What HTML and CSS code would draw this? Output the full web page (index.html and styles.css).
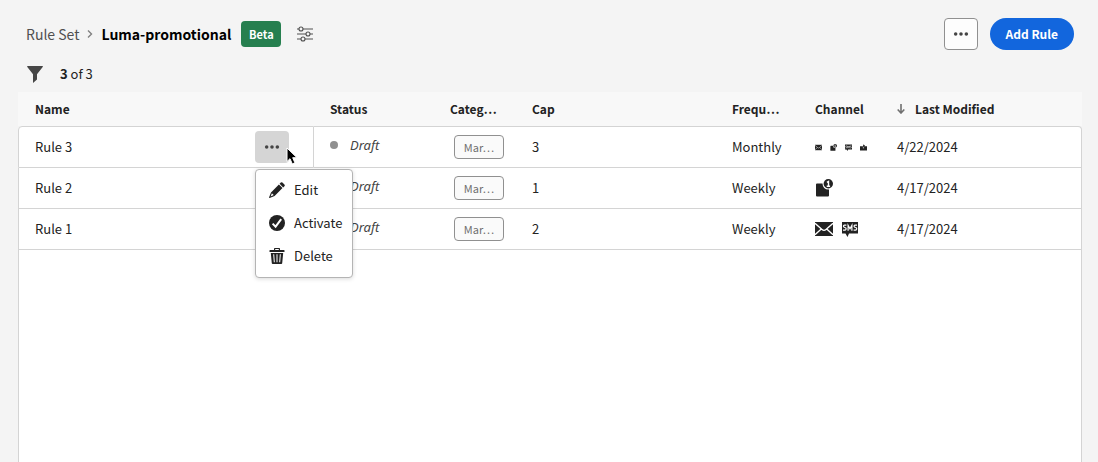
FILE: index.html
```html
<!DOCTYPE html>
<html lang="en">
<head>
<meta charset="utf-8">
<meta name="viewport" content="width=device-width, initial-scale=1">
<title>Luma-promotional</title>
<link rel="stylesheet" href="styles.css">
</head>
<body>
<svg class="sprite" aria-hidden="true">
  <symbol id="mail" viewBox="0 0 18 14"><path fill="currentColor" d="M0 0h18v14H0z"/><path fill="none" stroke="#fff" stroke-width="1.3" d="M0 1.300l7 6.200q2 1.700 4 0l7-6.200M0 12.700l6-5.500M18 12.700l-6-5.500"/></symbol>
  <symbol id="app" viewBox="0 0 18 18"><path fill="currentColor" d="M2 4.500h11V9h1v7.500q0 1-1 1H2q-1 0-1-1v-11q0-1 1-1z"/><circle cx="13.300" cy="4.800" r="5.800" fill="#fff"/><circle cx="13.300" cy="4.800" r="4.700" fill="currentColor"/><path fill="none" stroke="#fff" stroke-width="1.400" d="M11.900 3.300l1.600-.9v4.900M11.700 7.300h3.400"/></symbol>
  <symbol id="sms" viewBox="0 0 16 16"><path fill="currentColor" d="M0 1h16v11.500H7L5.500 16 3.500 12.500H0z"/><path fill="none" stroke="#fff" stroke-width="1.200" d="M4.400 4.100H2.500q-1.300.2-1 1.300.2.800 1.400 1.100 1.500.3 1.100 1.700-.3.900-1.200.9H1M6.100 9.700V4.400L8 7.800l1.900-3.400v5.300M15 4.100h-1.900q-1.300.2-1 1.300.2.800 1.400 1.100 1.500.3 1.100 1.700-.3.900-1.200.9h-1.800"/></symbol>
  <symbol id="direct" viewBox="0 0 18 18"><path fill="currentColor" d="M0 6h7.500v5h3V6H18v11H0zM8 1l5 2-2 2v4H8z"/></symbol>
  <symbol id="more" viewBox="0 0 18 18"><circle cx="3" cy="9" r="2"/><circle cx="9" cy="9" r="2"/><circle cx="15" cy="9" r="2"/></symbol>
</svg>

<header class="topbar">
  <nav class="crumbs" aria-label="Breadcrumb">
    <a class="crumb-link" href="#">Rule Set</a>
    <svg class="chevron" viewBox="0 0 6 10" aria-hidden="true"><path d="M1 1.500L4.500 5 1 8.500"/></svg>
    <h1 class="title">Luma-promotional</h1>
  </nav>
  <span class="badge">Beta</span>
  <button class="icon-button" type="button" aria-label="Properties">
    <svg class="sliders" viewBox="0 0 16 16" aria-hidden="true"><path d="M0 3h2M6 3h10M0 8h9M13 8h3M0 13h4M8 13h8"/><circle cx="4" cy="3" r="2"/><circle cx="11" cy="8" r="2"/><circle cx="6" cy="13" r="2"/></svg>
  </button>
  <div class="actions">
    <button class="more-button" type="button" aria-label="More actions"><svg class="dots" aria-hidden="true"><use href="#more"/></svg></button>
    <button class="primary-button" type="button">Add Rule</button>
  </div>
</header>

<div class="filterbar">
  <button class="icon-button" type="button" aria-label="Filter"><svg class="funnel" viewBox="0 0 16 17" aria-hidden="true"><path d="M.6 0h14.800q.9.200.3 1L10 8.200v5.300L6 17V8.200L.3 1Q-.2.200.6 0z"/></svg></button>
  <span class="count"><b>3</b> of 3</span>
</div>

<main class="listing">
  <table class="rules">
    <colgroup><col class="col-name"><col class="col-status"><col class="col-category"><col class="col-cap"><col class="col-frequency"><col class="col-channel"><col></colgroup>
    <thead>
      <tr>
        <th scope="col">Name</th><th scope="col">Status</th><th scope="col">Categ…</th><th scope="col">Cap</th><th scope="col">Frequ…</th><th scope="col">Channel</th>
        <th scope="col" aria-sort="descending"><span class="sorted"><svg class="arrow" viewBox="0 0 8 10" aria-hidden="true"><path d="M4 0v9M.7 5.500L4 9l3.300-3.500"/></svg>Last Modified</span></th>
      </tr>
    </thead>
    <tbody>
      <tr>
        <td class="name-active">
          <div class="name-cell">
            <span>Rule 3</span>
            <div class="row-actions">
              <button class="row-more" type="button" aria-label="Rule 3 actions" aria-expanded="true"><svg class="dots" aria-hidden="true"><use href="#more"/></svg></button>
              <div class="menu" role="menu">
                <button class="menu-item" type="button" role="menuitem"><svg class="menu-icon" viewBox="0 0 16 16" aria-hidden="true"><path d="M11.800.6q.8-.8 1.600 0l2 2q.8.800 0 1.600L14.200 5.400 10.600 1.800zM9.900 2.500l3.600 3.600-7.900 7.900L.6 15.900q-.7.100-.5-.6l1.900-4.900zM2.900 11.300l-1.300 3.100 3.100-1.300z" fill-rule="evenodd"/></svg>Edit</button>
                <button class="menu-item" type="button" role="menuitem"><svg class="menu-icon" viewBox="0 0 16 16" aria-hidden="true"><circle cx="8" cy="8" r="8"/><path class="tick" d="M3.600 8.600l3 3.100 5.600-7.500"/></svg>Activate</button>
                <button class="menu-item" type="button" role="menuitem"><svg class="menu-icon" viewBox="0 0 16 16" aria-hidden="true"><path fill-rule="evenodd" d="M5 2V.8Q5 0 5.800 0h4.400q.8 0 .8.800V2h4q.5 0 .5.500V4H.5V2.500Q.5 2 1 2zM6.200 1.100V2h3.600v-.9zM1.800 5h12.400l-1 10.200q-.1.800-.9.800H3.700q-.8 0-.9-.8zM4.200 6.200l.6 8h1l-.6-8zM7.500 6.200v8h1v-8zM10.800 6.200l-.6 8h1l.6-8z"/></svg>Delete</button>
              </div>
              <svg class="pointer" viewBox="0 0 13 18" aria-hidden="true"><path d="M1 1v13.500l3-2.800 2.300 5.200 2.600-1.100-2.200-5.100h4.300z"/></svg>
            </div>
          </div>
        </td>
        <td><span class="status status-dot">Draft</span></td>
        <td><span class="tag">Mar…</span></td>
        <td>3</td><td>Monthly</td>
        <td><span class="channels channels-mini"><svg class="mini"><use href="#mail"/></svg><svg class="mini"><use href="#app"/></svg><svg class="mini"><use href="#sms"/></svg><svg class="mini"><use href="#direct"/></svg></span></td>
        <td>4/22/2024</td>
      </tr>
      <tr>
        <td>Rule 2</td>
        <td><span class="status">Draft</span></td>
        <td><span class="tag">Mar…</span></td>
        <td>1</td><td>Weekly</td>
        <td><span class="channels"><svg class="channel"><use href="#app"/></svg></span></td>
        <td>4/17/2024</td>
      </tr>
      <tr>
        <td>Rule 1</td>
        <td><span class="status">Draft</span></td>
        <td><span class="tag">Mar…</span></td>
        <td>2</td><td>Weekly</td>
        <td><span class="channels"><svg class="channel"><use href="#mail"/></svg><svg class="channel channel-sms"><use href="#sms"/></svg></span></td>
        <td>4/17/2024</td>
      </tr>
    </tbody>
  </table>
  <div class="listing-rest"></div>
</main>
</body>
</html>
```
FILE: styles.css
```css
* { box-sizing: border-box; }

body {
  display: flex;
  flex-direction: column;
  min-height: 100vh;
  margin: 0;
  background: #f4f4f4;
  color: #222;
  font: 13px/20px "Noto Sans CJK SC", "Noto Sans", sans-serif;
}

button {
  margin: 0;
  padding: 0;
  border: 0;
  background: none;
  color: inherit;
  font: inherit;
  cursor: pointer;
}

svg { display: block; flex: none; }
.sprite { display: none; }

.topbar {
  display: flex;
  align-items: center;
  padding: 18px 24px 0 26px;
}

.crumbs {
  display: flex;
  align-items: center;
  gap: 8px;
  font-size: 14px;
}

.crumb-link { color: #505050; text-decoration: none; }

.chevron {
  width: 6px;
  height: 10px;
  fill: none;
  stroke: #808080;
  stroke-width: 1.4;
}

.title {
  margin: 0;
  color: #000;
  font-size: 14px;
  font-weight: 700;
}

.badge {
  width: 40px;
  margin: 0 16px 0 10px;
  border-radius: 4px;
  background: #267f4f;
  color: #fff;
  font-size: 11px;
  font-weight: 700;
  line-height: 26px;
  text-align: center;
}

.icon-button { display: flex; }

.sliders {
  width: 16px;
  height: 16px;
  fill: none;
  stroke: #505050;
  stroke-width: 1.1;
}

.actions {
  display: flex;
  gap: 12px;
  margin-left: auto;
}

.more-button {
  display: grid;
  place-items: center;
  width: 34px;
  height: 32px;
  border: 1px solid #909090;
  border-radius: 4px;
  background: #fdfdfd;
}

.dots { width: 16px; height: 16px; fill: #444; }

.primary-button {
  height: 32px;
  padding: 0 16px;
  border-radius: 16px;
  background: #1266dd;
  color: #fff;
  font-size: 12px;
  font-weight: 700;
}

.filterbar {
  display: flex;
  align-items: center;
  gap: 17px;
  padding: 14px 27px 8px;
}

.funnel { width: 16px; height: 17px; fill: #464646; }

.listing {
  display: flex;
  flex: 1;
  flex-direction: column;
  margin: 0 16px 0 18px;
}

.rules {
  width: 100%;
  border-spacing: 0;
  table-layout: fixed;
}

.col-name { width: 296px; }
.col-status { width: 120px; }
.col-category { width: 82px; }
.col-cap { width: 200px; }
.col-frequency { width: 83px; }
.col-channel { width: 82px; }

.rules th {
  height: 34px;
  padding: 0 0 0 16px;
  background: #f8f8f8;
  font-size: 12px;
  font-weight: 700;
  text-align: left;
  white-space: nowrap;
}

.rules td {
  height: 41px;
  padding: 0 0 0 16px;
  border-bottom: 1px solid #d4d4d4;
  background: #fff;
}

.rules th:first-child { padding-left: 17px; }
.rules td:first-child { border-left: 1px solid #d4d4d4; }
.rules td:last-child { border-right: 1px solid #d4d4d4; }

.rules tbody tr:first-child td { height: 42px; border-top: 1px solid #d4d4d4; }
.rules tbody tr:first-child td:first-child { border-top-left-radius: 4px; }
.rules tbody tr:first-child td:last-child { border-top-right-radius: 4px; }
.rules .name-active { border-right: 1px solid #d4d4d4; }

.sorted { display: flex; align-items: center; gap: 10px; }

.arrow {
  width: 8px;
  height: 10px;
  fill: none;
  stroke: #707070;
  stroke-width: 1.6;
}

.name-cell {
  display: flex;
  align-items: center;
  justify-content: space-between;
  padding-right: 24px;
}

.row-actions { position: relative; }

.row-more {
  display: grid;
  place-items: center;
  width: 34px;
  height: 32px;
  border-radius: 4px;
  background: #d5d5d5;
}

.menu {
  position: absolute;
  top: 38px;
  left: 0;
  z-index: 1;
  width: 98px;
  padding: 3px 0 5px;
  border: 1px solid #b4b4b4;
  border-radius: 4px;
  background: #fff;
  box-shadow: 0 1px 4px rgba(0, 0, 0, 0.15);
}

.menu-item {
  display: flex;
  align-items: center;
  gap: 9px;
  width: 100%;
  height: 33px;
  padding-left: 13px;
}

.menu-icon { width: 16px; height: 16px; fill: #222; }
.tick { fill: none; stroke: #fff; stroke-width: 2; }

.pointer {
  position: absolute;
  top: 16px;
  left: 31px;
  z-index: 2;
  width: 13px;
  height: 18px;
  fill: #000;
  stroke: #fff;
  stroke-width: 1;
}

.status {
  display: flex;
  align-items: center;
  gap: 12px;
  padding: 0 0 4px 20px;
  color: #444;
  font-family: "Noto Sans", sans-serif;
  font-style: italic;
}

.status-dot { padding-left: 0; }

.status-dot::before {
  width: 8px;
  height: 8px;
  border-radius: 50%;
  background: #909090;
  content: "";
}

.tag {
  display: block;
  width: 50px;
  margin-left: 4px;
  border: 1px solid #909090;
  border-radius: 4px;
  background: #fafafa;
  color: #707070;
  font-size: 11px;
  line-height: 22px;
  text-align: center;
}

.channels { display: flex; align-items: center; gap: 9px; }
.channels-mini { gap: 8px; }
.channel { width: 18px; height: 18px; color: #222; }
.channel-sms { width: 16px; height: 16px; }
.mini { width: 7px; height: 7px; }

.listing-rest {
  flex: 1;
  border: solid #d4d4d4;
  border-width: 0 1px;
  background: #fff;
}
```
